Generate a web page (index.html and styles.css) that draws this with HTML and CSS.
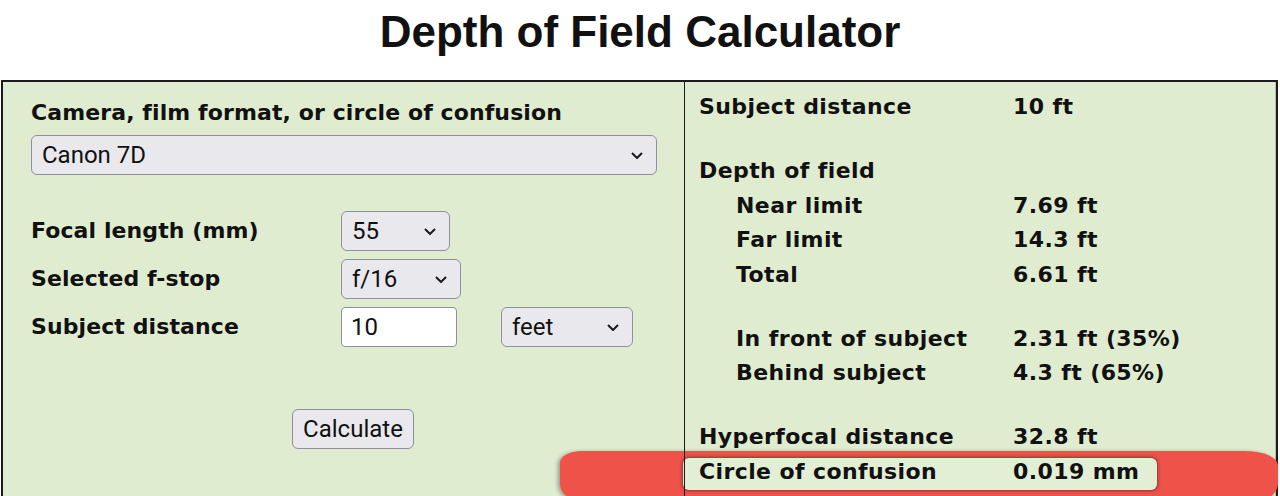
FILE: index.html
```html
<!DOCTYPE html>
<html lang="en">
<head>
	<meta charset="UTF-8">
	<title>Depth of Field Calculator</title>
	<link rel="stylesheet" href="styles.css">
</head>
<body>
	<h1 class="title">Depth of Field Calculator</h1>

	<div class="calc">
		<!-- red marker drawn over the screenshot -->
		<div class="mark"><div class="mark_hole"></div></div>

		<div class="inputs">
			<div class="lbl">Camera, film format, or circle of confusion</div>
			<div class="pick cam">
				<select class="sel"><option>Canon 7D</option></select>
				<svg class="chev" viewBox="0 0 12 7"><path d="M1 1l5 5 5-5" fill="none" stroke="#1a1a1a" stroke-width="2"/></svg>
			</div>

			<div class="fields">
				<div class="lbl">Focal length (mm)</div>
				<div class="pick focal">
					<select class="sel"><option>55</option></select>
					<svg class="chev" viewBox="0 0 12 7"><path d="M1 1l5 5 5-5" fill="none" stroke="#1a1a1a" stroke-width="2"/></svg>
				</div>
				<div></div>

				<div class="lbl">Selected f-stop</div>
				<div class="pick fstop">
					<select class="sel"><option>f/16</option></select>
					<svg class="chev" viewBox="0 0 12 7"><path d="M1 1l5 5 5-5" fill="none" stroke="#1a1a1a" stroke-width="2"/></svg>
				</div>
				<div></div>

				<div class="lbl">Subject distance</div>
				<input class="txt" type="text" value="10">
				<div class="pick unit">
					<select class="sel"><option>feet</option></select>
					<svg class="chev" viewBox="0 0 12 7"><path d="M1 1l5 5 5-5" fill="none" stroke="#1a1a1a" stroke-width="2"/></svg>
				</div>
			</div>

			<div class="go"><button class="btn">Calculate</button></div>
		</div>

		<div class="results">
			<div class="res"><span>Subject distance</span><span>10 ft</span></div>

			<div class="res sep"><span>Depth of field</span><span></span></div>
			<div class="res sub"><span>Near limit</span><span>7.69 ft</span></div>
			<div class="res sub"><span>Far limit</span><span>14.3 ft</span></div>
			<div class="res sub"><span>Total</span><span>6.61 ft</span></div>

			<div class="res sub sep"><span>In front of subject</span><span>2.31 ft (35%)</span></div>
			<div class="res sub"><span>Behind subject</span><span>4.3 ft (65%)</span></div>

			<div class="res sep"><span>Hyperfocal distance</span><span>32.8 ft</span></div>
			<div class="res"><span>Circle of confusion</span><span>0.019 mm</span></div>
		</div>
	</div>
</body>
</html>
```

FILE: styles.css
```css
*{margin:0;padding:0;box-sizing:border-box;}
html,body{overflow:hidden;}
body{background:#fff;color:#111;font-family:"DejaVu Sans",Verdana,sans-serif;}

.title{font:bold 44px/51px "Liberation Sans",Arial,sans-serif;text-align:center;margin:6px 0 23px;color:#111;}

.calc{position:relative;display:flex;width:1277px;margin-left:1px;border:2px solid #1c1c1c;border-bottom:none;background:#dfecd0;box-shadow:inset -1px 0 0 #b8bfae;}

.mark{position:absolute;left:557px;top:369px;width:718px;height:48px;background:#ee5249;border-radius:22px 34px 16px 16px/12px 14px 16px 16px;box-shadow:-2px 1px 4px rgba(0,0,0,0.35);z-index:0;}
.mark_hole{position:absolute;left:123px;top:7px;width:474px;height:32px;background:#e2efd4;border-radius:6px;box-shadow:0 0 3px 1px rgba(40,40,30,0.55);}

.inputs{position:relative;z-index:1;width:681px;padding:18px 0 0 28px;}
.lbl{font-size:22px;font-weight:bold;line-height:26px;letter-spacing:0.1px;}

.pick{position:relative;display:inline-block;height:40px;}
.pick .sel{width:100%;}
.chev{position:absolute;right:14px;top:17px;width:12px;height:7px;pointer-events:none;}
.sel,.txt,.btn{font:24px Roboto,"Noto Sans",sans-serif;color:#111;height:40px;border:1px solid #8f8f9d;border-radius:6px;outline:none;}
.sel{appearance:none;-webkit-appearance:none;background:#e9e9ed;padding:0 0 0 10px;}
.txt{background:#fff;padding:0 0 0 9px;width:116px;border-radius:4px;}

.cam{display:block;width:626px;margin-top:9px;}
.fields{display:grid;grid-template-columns:310px 120px 1fr;grid-auto-rows:40px;row-gap:8px;align-items:center;margin-top:36px;}
.focal{width:109px;}
.fstop{width:120px;}
.unit{width:132px;margin-left:40px;}

.go{margin:62px 0 0 261px;}
.btn{width:122px;background:#e9e9ed;}

.results{position:relative;z-index:1;flex:1;border-left:1px solid #1c1c1c;padding:8px 0 24px 14px;}
.res{display:grid;grid-template-columns:314px auto;font-size:22px;font-weight:bold;line-height:34.5px;letter-spacing:0.4px;}
.res.sub span:first-child{padding-left:37px;}
.res.sep{margin-top:29.5px;}
```
